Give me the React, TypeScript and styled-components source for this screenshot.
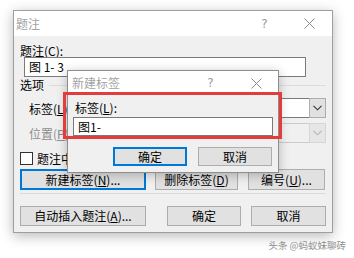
import React from "react";
import styled, { createGlobalStyle, css } from "styled-components";

const Global = createGlobalStyle`
  html, body { margin: 0; padding: 0; background: #ffffff; }
  body {
    font-family: "Noto Sans CJK SC", "Microsoft YaHei", sans-serif;
    font-size: 12px;
    color: #000;
  }
  * { box-sizing: border-box; }
`;

const Page = styled.div`
  position: relative;
  width: 354px;
  height: 258px;
  overflow: hidden;
  padding: 10px 0 0 13px;
`;

const Window = styled.div<{ $w: number }>`
  width: ${(p) => p.$w}px;
  border: 1px solid #9e9e9e;
  background: #f0f0f0;
  display: flex;
  flex-direction: column;
  box-shadow: 0 3px 12px rgba(0, 0, 0, 0.28);
`;

const Dialog = styled(Window)`
  position: absolute;
  left: 67px;
  top: 70px;
  border-color: #8e8e8e;
  box-shadow: 0 2px 10px rgba(0, 0, 0, 0.25);
`;

const TitleBar = styled.div<{ $h: number }>`
  height: ${(p) => p.$h}px;
  background: #ffffff;
  display: flex;
  align-items: center;
`;

const Title = styled.span<{ $pad: number }>`
  flex: 1;
  padding-left: ${(p) => p.$pad}px;
  color: #a3a3a3;
  line-height: 14px;
`;

const CaptionButton = styled.span<{ $w: number }>`
  width: ${(p) => p.$w}px;
  height: 100%;
  display: flex;
  align-items: center;
  justify-content: center;
  color: #9a9a9a;
  font-family: "DejaVu Sans", sans-serif;
  font-size: 12px;
`;

const Body = styled.div<{ $pad: string }>`
  display: flex;
  flex-direction: column;
  padding: ${(p) => p.$pad};
`;

const FieldLabel = styled.div<{ $h: number; $indent?: number }>`
  height: ${(p) => p.$h}px;
  line-height: ${(p) => p.$h}px;
  padding-left: ${(p) => p.$indent ?? 0}px;
  white-space: nowrap;
`;

const TextBox = styled.div<{ $w: number; $h: number; $ml: number; $mt: number }>`
  width: ${(p) => p.$w}px;
  height: ${(p) => p.$h}px;
  margin-left: ${(p) => p.$ml}px;
  margin-top: ${(p) => p.$mt}px;
  border: 1px solid #7a7a7a;
  background: #fff;
  padding-left: 4px;
  line-height: ${(p) => p.$h - 2}px;
  white-space: nowrap;
`;

const GroupHeader = styled.div`
  margin-top: 1px;
  height: 14px;
  display: flex;
  align-items: center;
  gap: 5px;
  line-height: 14px;
`;

const Rule = styled.div`
  flex: 1;
  height: 1px;
  background: #dcdcdc;
`;

const ComboRow = styled.div<{ $mt: number; $disabled?: boolean }>`
  margin-top: ${(p) => p.$mt}px;
  height: 20px;
  display: flex;
  align-items: center;
  padding-left: 9px;
  color: ${(p) => (p.$disabled ? "#8d8d8d" : "#000")};
`;

const Combo = styled.div<{ $disabled?: boolean }>`
  margin-left: auto;
  width: 246px;
  height: 20px;
  display: flex;
  justify-content: flex-end;
  border: 1px solid ${(p) => (p.$disabled ? "#cccccc" : "#7a7a7a")};
  background: ${(p) => (p.$disabled ? "#f0f0f0" : "#ffffff")};
`;

const DropButton = styled.div<{ $disabled?: boolean }>`
  width: 17px;
  display: flex;
  align-items: center;
  justify-content: center;
  background: ${(p) => (p.$disabled ? "#e6e6e6" : "#e1e1e1")};
  border: 1px solid ${(p) => (p.$disabled ? "#d6d6d6" : "#adadad")};
  margin: -1px -1px -1px 0;
  height: 20px;
`;

const CheckRow = styled.div`
  margin-top: 9px;
  height: 13px;
  display: flex;
  align-items: center;
  gap: 4px;
  line-height: 13px;
`;

const CheckBox = styled.span`
  width: 13px;
  height: 13px;
  border: 1px solid #333;
  background: #fff;
`;

const CheckLabel = styled.span`
  max-width: 70px;
  overflow: hidden;
  white-space: nowrap;
`;

const ButtonRow = styled.div<{ $mt: number; $h: number }>`
  margin-top: ${(p) => p.$mt}px;
  height: ${(p) => p.$h}px;
  display: flex;
  align-items: stretch;
`;

const Spacer = styled.div<{ $w?: number }>`
  flex: ${(p) => (p.$w === undefined ? 1 : "none")};
  width: ${(p) => (p.$w === undefined ? "auto" : `${p.$w}px`)};
`;

const Button = styled.div<{ $w: number; $focused?: boolean }>`
  width: ${(p) => p.$w}px;
  display: flex;
  align-items: center;
  justify-content: center;
  background: #e1e1e1;
  border: 1px solid #adadad;
  white-space: nowrap;
  line-height: 14px;
  ${(p) =>
    p.$focused &&
    css`
      border: 2px solid #0078d7;
    `}
`;

const Separator = styled.div`
  margin-top: 3px;
  height: 1px;
  background: #dadada;
`;

const Highlight = styled.div`
  position: absolute;
  left: 63px;
  top: 92px;
  width: 219px;
  height: 47px;
  border: 3px solid #e23c3c;
`;

const Watermark = styled.div`
  margin-top: 6px;
  padding-right: 8px;
  text-align: right;
  font-size: 9.5px;
  line-height: 12px;
  color: #8f8f8f;
  white-space: nowrap;
`;

const Chevron = ({ color }: { color: string }) => (
  <svg width="9" height="6" viewBox="0 0 9 6">
    <polyline points="0.5,0.8 4.5,4.8 8.5,0.8" fill="none" stroke={color} strokeWidth="1.1" />
  </svg>
);

const CloseGlyph = () => (
  <svg width="11" height="11" viewBox="0 0 11 11">
    <path d="M0.5 0.5 L10.5 10.5 M10.5 0.5 L0.5 10.5" stroke="#8a8a8a" strokeWidth="1" fill="none" />
  </svg>
);

export default function App() {
  return (
    <>
      <Global />
      <Page>
        <Window $w={320}>
          <TitleBar $h={25}>
            <Title $pad={2}>题注</Title>
            <CaptionButton $w={45}>?</CaptionButton>
            <CaptionButton $w={45}>
              <CloseGlyph />
            </CaptionButton>
          </TitleBar>
          <Body $pad="8px 6px 6px 6px">
            <FieldLabel $h={13}>
              题注(<u>C</u>):
            </FieldLabel>
            <TextBox $w={282} $h={20} $ml={4} $mt={0}>
              图 1- 3
            </TextBox>
            <GroupHeader>
              选项
              <Rule />
            </GroupHeader>
            <ComboRow $mt={6}>
              标签(<u>L</u>):
              <Combo>
                <DropButton>
                  <Chevron color="#333" />
                </DropButton>
              </Combo>
            </ComboRow>
            <ComboRow $mt={5} $disabled>
              位置(<u>P</u>):
              <Combo $disabled>
                <DropButton $disabled>
                  <Chevron color="#b5b5b5" />
                </DropButton>
              </Combo>
            </ComboRow>
            <CheckRow>
              <CheckBox />
              <CheckLabel>题注中不包含标签(E)</CheckLabel>
            </CheckRow>
            <ButtonRow $mt={4} $h={21}>
              <Button $w={126} $focused>
                新建标签(<u>N</u>)...
              </Button>
              <Spacer $w={9} />
              <Button $w={83}>
                删除标签(<u>D</u>)
              </Button>
              <Spacer $w={10} />
              <Button $w={77}>
                编号(<u>U</u>)...
              </Button>
            </ButtonRow>
            <Separator />
            <ButtonRow $mt={12} $h={20}>
              <Button $w={126}>
                自动插入题注(<u>A</u>)...
              </Button>
              <Spacer />
              <Button $w={74}>确定</Button>
              <Spacer $w={10} />
              <Button $w={75}>取消</Button>
            </ButtonRow>
          </Body>
        </Window>
        <Watermark>头条 @蚂蚁妹聊砖</Watermark>

        <Dialog $w={212}>
          <TitleBar $h={24}>
            <Title $pad={4}>新建标签</Title>
            <CaptionButton $w={47}>?</CaptionButton>
            <CaptionButton $w={44}>
              <CloseGlyph />
            </CaptionButton>
          </TitleBar>
          <Body $pad="6px 5px 6px 5px">
            <FieldLabel $h={14} $indent={2}>
              标签(<u>L</u>):
            </FieldLabel>
            <TextBox $w={200} $h={19} $ml={0} $mt={2}>
              图1-
            </TextBox>
            <ButtonRow $mt={11} $h={19}>
              <Spacer />
              <Button $w={74} $focused>
                确定
              </Button>
              <Spacer $w={11} />
              <Button $w={74}>取消</Button>
              <Spacer $w={1} />
            </ButtonRow>
          </Body>
        </Dialog>
        <Highlight />
      </Page>
    </>
  );
}
